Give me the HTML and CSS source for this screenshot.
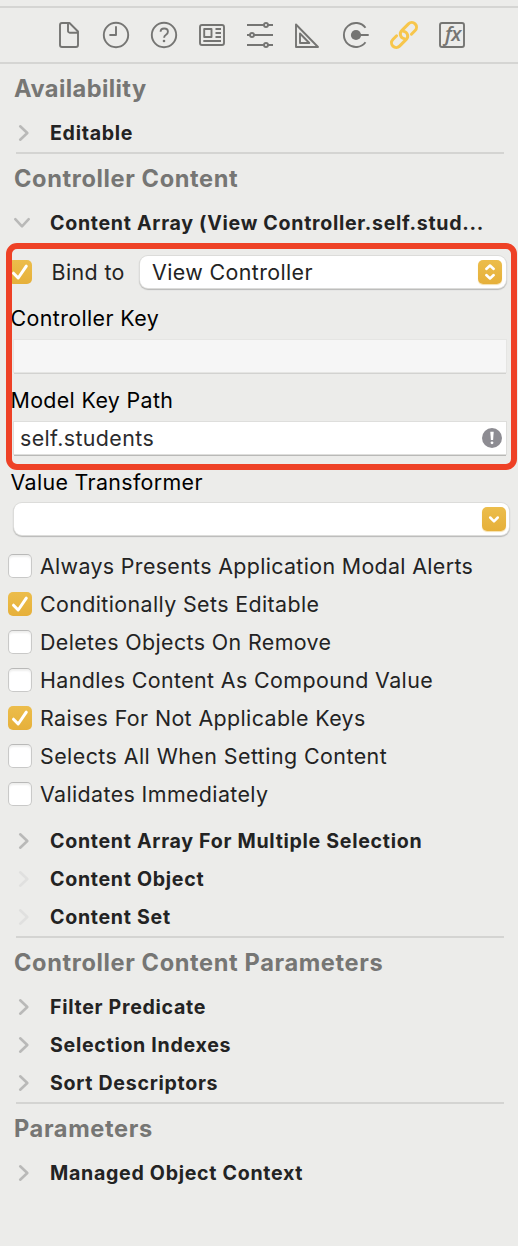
FILE: index.html
```html
<!DOCTYPE html>
<html lang="en">
<head>
<meta charset="utf-8">
<title>Bindings Inspector</title>
<link rel="stylesheet" href="styles.css">
</head>
<body>
<svg class="defs" aria-hidden="true">
  <symbol id="chev" viewBox="0 0 24 24"><path d="M8.2 5.3L15.3 12L8.2 18.7"/></symbol>
  <symbol id="tick" viewBox="0 0 24 24"><path d="M5.5 13.2L10.2 18L18.3 6.2"/></symbol>
</svg>
<main class="inspector">
  <nav class="toolbar">
    <svg class="tool" viewBox="44 8 48 54"><path d="M62 23H69.5L78 31.5V45a2 2 0 0 1-2 2H62a2 2 0 0 1-2-2V25a2 2 0 0 1 2-2zM68 23v8a1.7 1.7 0 0 0 1.7 1.7H78"/></svg>
    <svg class="tool" viewBox="92 8 48 54"><circle cx="116" cy="35" r="12.2"/><path d="M116 26.3V35h-6.6"/></svg>
    <svg class="tool" viewBox="140 8 48 54"><circle cx="164" cy="35" r="12.2"/><path d="M160.6 31.8c0-2 1.5-3.3 3.6-3.3s3.7 1.3 3.7 3.2c0 1.4-.7 2.2-1.9 3c-1.3.8-1.9 1.4-1.9 3"/><circle class="fill" cx="164" cy="41" r="1.3"/></svg>
    <svg class="tool" viewBox="188 8 48 54"><rect x="200" y="25" width="24" height="20" rx="2"/><path d="M204.2 29h7.3v8h-7.3zM215.5 29h5.5M215.5 33h5.5M215.5 37h5.5M203.3 41H221"/></svg>
    <svg class="tool" viewBox="236 8 48 54"><path d="M247 25h17M268 25h5M247 35h3M254 35h19M247 45h17M268 45h5"/><circle cx="266" cy="25" r="2"/><circle cx="252" cy="35" r="2"/><circle cx="266" cy="45" r="2"/></svg>
    <svg class="tool" viewBox="284 8 48 54"><path d="M296 24.5V47h22zM300 33.5V43h9.3z"/></svg>
    <svg class="tool" viewBox="332 8 48 54"><path d="M365.5 27.8a12 12 0 1 0 0 14.4M356 35h12.7"/><circle class="fill" cx="356" cy="35" r="5.1"/></svg>
    <svg class="tool tool-active" viewBox="380 8 48 54"><g transform="translate(404 35) rotate(-45)"><path d="M5.8 4.7H11a4.7 4.7 0 0 0 0-9.4H1.5A4.7 4.7 0 0 0-2.4 2.7"/><path d="M-5.8-4.7H-11a4.7 4.7 0 0 0 0 9.4H-1.5A4.7 4.7 0 0 0 2.4-2.7"/></g></svg>
    <svg class="tool" viewBox="428 8 48 54"><rect x="440" y="23" width="24" height="24" rx="2"/><text x="445" y="41">fx</text></svg>
  </nav>

  <section class="group">
    <h2 class="title tight">Availability</h2>
    <div class="row"><svg class="chev"><use href="#chev"/></svg><span>Editable</span></div>
  </section>

  <section class="group">
    <h2 class="title">Controller Content</h2>
    <div class="row"><svg class="chev open"><use href="#chev"/></svg><span>Content Array (View Controller.self.stud...</span></div>

    <div class="binding">
      <div class="bind-row">
        <span class="box on"><svg><use href="#tick"/></svg></span>
        <span class="bind-label">Bind to</span>
        <div class="popup"><span>View Controller</span>
          <span class="knob"><svg viewBox="0 0 24 24"><path d="M8.3 9L12 5.5L15.7 9M8.3 15l3.7 3.5l3.7-3.5"/></svg></span>
        </div>
      </div>
      <label class="label">Controller Key</label>
      <div class="field disabled"></div>
      <label class="label">Model Key Path</label>
      <div class="field"><span>self.students</span>
        <svg class="warn" viewBox="0 0 20 20"><circle cx="10" cy="10" r="10"/><path d="M8.3 3.8h3.4l-.6 8.3H8.9z"/><circle class="dot" cx="10" cy="14.8" r="1.4"/></svg>
      </div>
      <label class="label">Value Transformer</label>
      <div class="combo"><span class="knob"><svg viewBox="0 0 24 24"><path d="M8.2 10.5l3.8 3.8 3.8-3.8"/></svg></span></div>
      <div class="highlight"></div>
    </div>

    <div class="checks">
      <div class="check tight"><span class="box"></span><span>Always Presents Application Modal Alerts</span></div>
      <div class="check"><span class="box on"><svg><use href="#tick"/></svg></span><span>Conditionally Sets Editable</span></div>
      <div class="check"><span class="box"></span><span>Deletes Objects On Remove</span></div>
      <div class="check"><span class="box"></span><span>Handles Content As Compound Value</span></div>
      <div class="check"><span class="box on"><svg><use href="#tick"/></svg></span><span>Raises For Not Applicable Keys</span></div>
      <div class="check loose"><span class="box"></span><span>Selects All When Setting Content</span></div>
      <div class="check"><span class="box"></span><span>Validates Immediately</span></div>
    </div>

    <div class="row"><svg class="chev"><use href="#chev"/></svg><span>Content Array For Multiple Selection</span></div>
    <div class="row"><svg class="chev faint"><use href="#chev"/></svg><span>Content Object</span></div>
    <div class="row"><svg class="chev faint"><use href="#chev"/></svg><span>Content Set</span></div>
  </section>

  <section class="group">
    <h2 class="title">Controller Content Parameters</h2>
    <div class="row"><svg class="chev"><use href="#chev"/></svg><span>Filter Predicate</span></div>
    <div class="row"><svg class="chev"><use href="#chev"/></svg><span>Selection Indexes</span></div>
    <div class="row"><svg class="chev"><use href="#chev"/></svg><span>Sort Descriptors</span></div>
  </section>

  <section class="group">
    <h2 class="title">Parameters</h2>
    <div class="row"><svg class="chev"><use href="#chev"/></svg><span>Managed Object Context</span></div>
  </section>
</main>
</body>
</html>
```
FILE: styles.css
```css
* { box-sizing: border-box; }
body {
  margin: 0;
  background: #ececea;
  color: #232323;
  font-family: Inter, "Liberation Sans", sans-serif;
  font-size: 21.4px;
  letter-spacing: 0.39px;
  white-space: nowrap;
}
.defs { display: none; }
.inspector { height: 1246px; padding-top: 6px; overflow: hidden; }

.toolbar {
  display: flex;
  height: 58px;
  padding-left: 44px;
  border-top: 2px solid #d5d5d3;
  border-bottom: 2px solid #d5d5d3;
}
.tool { width: 48px; height: 54px; fill: none; stroke: #757573; stroke-width: 1.9; stroke-linejoin: round; }
.tool .fill { fill: #757573; stroke: none; }
.tool text { fill: #757573; stroke: none; font: italic 600 20px "Open Sans", sans-serif; letter-spacing: -0.5px; }
.tool-active { stroke: #f7c64c; stroke-width: 3; stroke-linecap: round; }

.group + .group::before { content: ""; display: block; height: 2px; margin: 0 14px 0 16px; background: #d4d4d2; }
.title {
  height: 50px;
  margin: 0 0 0 14px;
  line-height: 50px;
  color: #767674;
  font-size: 23.6px;
  font-weight: 700;
  letter-spacing: 0.62px;
}
.title.tight { letter-spacing: 0.42px; }
.row {
  display: flex;
  align-items: center;
  height: 38px;
  padding-left: 12px;
  gap: 14px;
  font-size: 19.6px;
  font-weight: 700;
  letter-spacing: 0.7px;
}
.chev { width: 24px; height: 24px; fill: none; stroke: #b9b9b8; stroke-width: 2.6; stroke-linecap: round; stroke-linejoin: round; }
.chev.open { transform: translateX(-2px) rotate(90deg); }
.chev.faint { stroke: #e0e0df; }

.binding { position: relative; height: 305px; padding: 13px 0 0; color: #000; }
.bind-row { display: flex; align-items: center; height: 34px; padding: 0 12px 0 8px; color: #232323; }
.bind-label { width: 88px; padding-left: 19.5px; }
.box {
  flex: none;
  width: 24px;
  height: 24px;
  border: 1px solid #c9c9c8;
  border-top-color: #b9b9b8;
  border-radius: 5px;
  background: #fff;
  box-shadow: inset 0 2px 2px #efefee;
}
.box.on { border: 0; background: linear-gradient(#ecbd4b, #e6b03a); box-shadow: none; }
.box svg { display: block; width: 24px; height: 24px; fill: none; stroke: #fff; stroke-width: 3; stroke-linecap: round; stroke-linejoin: round; }
.popup, .combo {
  display: flex;
  align-items: center;
  justify-content: space-between;
  height: 32px;
  border-radius: 8px;
  background: #fff;
  box-shadow: 0 0 0 1px #dcdcda, 0 1px 1px 1px #b9b9b7;
}
.popup { width: 366px; margin-left: 20px; padding: 0 4px 0 12px; }
.combo { width: 495px; margin: 6px 0 0 14px; padding-right: 4px; justify-content: flex-end; }
.knob { width: 24px; height: 24px; border-radius: 5px; background: linear-gradient(#ecbd4b, #e6b03a); box-shadow: 0 1px 1px #f5dfaa; }
.combo .knob { margin-right: -1px; }
.knob svg { display: block; width: 24px; height: 24px; fill: none; stroke: #fff; stroke-width: 2.5; stroke-linecap: round; stroke-linejoin: round; }
.label { display: block; height: 30px; margin-top: 14px; padding-left: 10.5px; line-height: 30px; }
.field + .label { margin-top: 13px; letter-spacing: 0.35px; }
.label + .field { margin-top: 7px; }
.field {
  display: flex;
  align-items: center;
  justify-content: space-between;
  height: 32px;
  margin: 0 12px 0 14px;
  padding: 0 4px 0 6px;
  background: #fff;
  color: #2b2b2d;
  box-shadow: 0 0 0 1px #dededc, 0 2px 0 0 #b9b9b7;
}
.field.disabled { background: #f6f6f6; box-shadow: 0 0 0 1px #e5e5e3, 0 2px 0 0 #d2d2d0; }
.warn { width: 20px; height: 20px; fill: #8d8c92; }
.warn path, .warn .dot { fill: #fff; }
/* Callout frame drawn over the binding controls */
.highlight {
  position: absolute;
  top: 1px;
  left: 6px;
  width: 511px;
  height: 227px;
  border: 6px solid #ee4126;
  border-radius: 11px;
}

.checks { padding-bottom: 9px; }
.check { display: flex; align-items: center; height: 38px; padding-left: 8px; gap: 8px; }
.check.tight { letter-spacing: 0.34px; }
.check.loose { letter-spacing: 0.45px; }
```
